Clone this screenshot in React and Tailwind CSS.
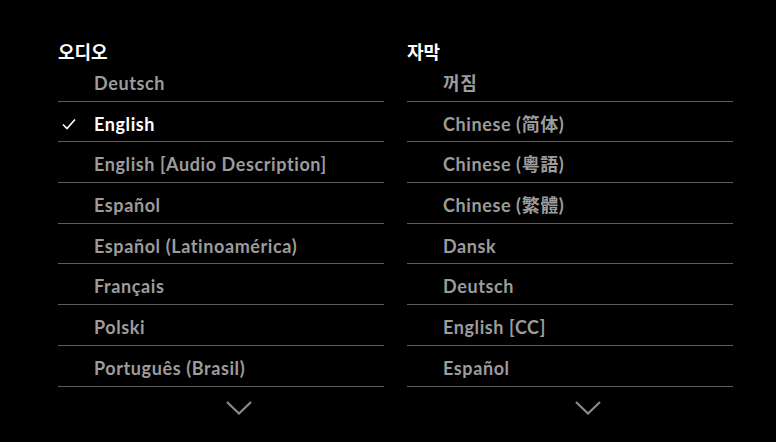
import React from "react";

const audio = [
  "Deutsch",
  "English",
  "English [Audio Description]",
  "Español",
  "Español (Latinoamérica)",
  "Français",
  "Polski",
  "Português (Brasil)",
];
const subs = [
  "꺼짐",
  "Chinese (简体)",
  "Chinese (粵語)",
  "Chinese (繁體)",
  "Dansk",
  "Deutsch",
  "English [CC]",
  "Español",
];

function Check() {
  return (
    <svg width="14" height="12" viewBox="0 0 14 12" fill="none">
      <path d="M1 6.5 L5 10.5 L13 1.5" stroke="#ffffff" strokeWidth="1.6" />
    </svg>
  );
}

function Chevron() {
  return (
    <svg width="26" height="14" viewBox="0 0 26 14" fill="none">
      <path d="M1 1 L13 12.5 L25 1" stroke="#8a8a8a" strokeWidth="2.2" />
    </svg>
  );
}

function Column({ title, items, selected }) {
  return (
    <div className="flex w-[326px] flex-col">
      <div className="h-[18px] text-[18px] font-bold leading-[18px] text-white">{title}</div>
      <div className="flex flex-col">
        {items.map((t, i) => (
          <div key={t} className="flex h-[40.7px] items-center border-b border-[#5c5c5c] pt-1">
            <div className="flex w-[36px] items-center pl-[4px]">
              {i === selected ? <Check /> : null}
            </div>
            <div
              className={
                "text-[18px] font-bold leading-[22px] tracking-[0.6px] " +
                (i === selected ? "text-white" : "text-[#9c9c9c]")
              }
            >
              {t}
            </div>
          </div>
        ))}
      </div>
      <div className="flex justify-center pl-[36px] pt-[14px]">
        <Chevron />
      </div>
    </div>
  );
}

export default function App() {
  return (
    <div
      className="flex h-[442px] w-[776px] gap-[23px] bg-black pl-[58px] pt-[43px]"
      style={{ fontFamily: "Lato, 'Noto Sans CJK KR', sans-serif" }}
    >
      <Column title="오디오" items={audio} selected={1} />
      <Column title="자막" items={subs} selected={-1} />
    </div>
  );
}
